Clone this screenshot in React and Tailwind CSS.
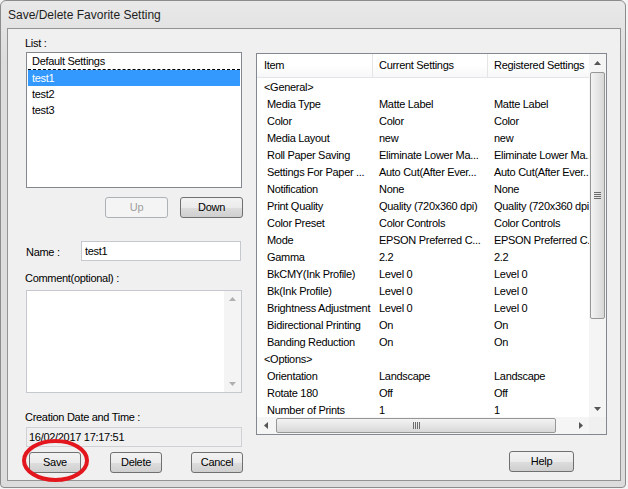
import React from 'react'

const ROWS = [
  ['<General>', '', '', true],
  ['Media Type', 'Matte Label', 'Matte Label'],
  ['Color', 'Color', 'Color'],
  ['Media Layout', 'new', 'new'],
  ['Roll Paper Saving', 'Eliminate Lower Ma...', 'Eliminate Lower Ma...'],
  ['Settings For Paper ...', 'Auto Cut(After Ever...', 'Auto Cut(After Ever...'],
  ['Notification', 'None', 'None'],
  ['Print Quality', 'Quality (720x360 dpi)', 'Quality (720x360 dpi)'],
  ['Color Preset', 'Color Controls', 'Color Controls'],
  ['Mode', 'EPSON Preferred C...', 'EPSON Preferred C...'],
  ['Gamma', '2.2', '2.2'],
  ['BkCMY(Ink Profile)', 'Level 0', 'Level 0'],
  ['Bk(Ink Profile)', 'Level 0', 'Level 0'],
  ['Brightness Adjustment', 'Level 0', 'Level 0'],
  ['Bidirectional Printing', 'On', 'On'],
  ['Banding Reduction', 'On', 'On'],
  ['<Options>', '', '', true],
  ['Orientation', 'Landscape', 'Landscape'],
  ['Rotate 180', 'Off', 'Off'],
  ['Number of Prints', '1', '1'],
]

function Tri({ dir, color = '#555' }) {
  const vert = dir === 'up' || dir === 'down'
  const w = vert ? 7 : 4
  const h = vert ? 4 : 7
  const pts = { up: '0,4 3.5,0 7,4', down: '0,0 7,0 3.5,4', left: '4,0 4,7 0,3.5', right: '0,0 0,7 4,3.5' }[dir]
  return (
    <svg width={w} height={h} viewBox={`0 0 ${w} ${h}`}>
      <polygon points={pts} fill={color} />
    </svg>
  )
}

function Btn({ children, className = '', disabled }) {
  return (
    <div
      className={`h-[21px] flex items-center justify-center rounded-[3px] border ${
        disabled
          ? 'border-[#adb2b5] bg-[#f4f4f4] text-[#a0a0a0]'
          : 'border-[#707070] bg-[linear-gradient(to_bottom,#f2f2f2_0%,#ebebeb_50%,#dddddd_51%,#cfcfcf_100%)]'
      } ${className}`}
    >
      {children}
    </div>
  )
}

function Grip({ vertical }) {
  return (
    <div className={`flex ${vertical ? 'flex-col gap-[1px]' : 'flex-row gap-[1px]'}`}>
      {[0, 1, 2, 3].map((i) => (
        <div key={i} className={vertical ? 'w-[7px] h-[1px] bg-[#6b6b6b]' : 'w-[1px] h-[7px] bg-[#6b6b6b]'} />
      ))}
    </div>
  )
}

export default function App() {
  return (
    <div className="w-[628px] h-[489px] bg-[#f4f4f4] relative overflow-hidden font-['Liberation_Sans',Arial,sans-serif] text-[11px] text-black tracking-[-0.3px]">
      <div className="w-[626px] h-[488px] rounded-t-[6px] rounded-b-[4px] border border-[#8c8c8c] bg-[linear-gradient(to_bottom,#e9e9e9,#dcdcdc_60px,#dcdcdc)] flex flex-col">
        {/* title bar */}
        <div className="h-[27px] flex items-center pl-[7px] text-[12px] tracking-normal text-[#1e1e1e]">
          Save/Delete Favorite Setting
        </div>

        {/* client area */}
        <div className="ml-[6px] w-[614px] h-[453px] border border-[#939393] bg-[#f0f0f0] flex flex-row">
          {/* left column */}
          <div className="ml-[18px] w-[217px] pt-[7px] flex flex-col">
            <div className="h-[14px] leading-[14px] -ml-px">List :</div>
            <div className="mt-[2px] w-[216px] h-[136px] border border-[#828790] bg-white pt-px px-px">
              <div className="h-[16px] leading-[15px] pl-[4px] border-b border-dashed border-black">Default Settings</div>
              <div className="h-[16px] leading-[16px] pl-[4px] bg-[#3399ff] text-white">test1</div>
              <div className="h-[16px] leading-[16px] pl-[4px]">test2</div>
              <div className="h-[16px] leading-[16px] pl-[4px]">test3</div>
            </div>
            <div className="mt-[9px] flex flex-row justify-end gap-[12px]">
              <Btn disabled className="w-[63px] h-[20px]">Up</Btn>
              <Btn className="w-[63px] h-[20px]">Down</Btn>
            </div>
            <div className="mt-[23px] flex flex-row items-center">
              <div className="w-[56px] -ml-px pl-px pt-[2px]">Name :</div>
              <div className="w-[160px] h-[20px] border border-[#c5c8ce] bg-white pl-[3px] leading-[18px]">test1</div>
            </div>
            <div className="mt-[10px] h-[14px] leading-[14px] -ml-px">Comment(optional) :</div>
            <div className="mt-[5px] w-[216px] h-[103px] border border-[#c5c8ce] bg-white flex flex-row justify-end">
              <div className="w-[17px] h-full bg-[#f4f4f4] flex flex-col items-center justify-between py-[6px]">
                <Tri dir="up" color="#b0b0b0" />
                <Tri dir="down" color="#b0b0b0" />
              </div>
            </div>
            <div className="mt-[17px] h-[14px] leading-[14px] -ml-px">Creation Date and Time :</div>
            <div className="mt-[3px] w-[216px] h-[20px] border border-[#cfd1d5] bg-[#f0f0f0] pl-[2px] leading-[18px]">
              16/02/2017 17:17:51
            </div>
            <div className="mt-[5px] ml-[3px] flex flex-row gap-[29px]">
              <Btn className="w-[52px]">Save</Btn>
              <Btn className="w-[52px]">Delete</Btn>
              <Btn className="w-[52px]">Cancel</Btn>
            </div>
          </div>

          {/* right column */}
          <div className="ml-[13px] pt-[24px] flex flex-col">
            <div className="w-[351px] h-[382px] border border-[#828790] bg-white flex flex-col">
              <div className="h-[363px] flex flex-row">
                <div className="w-[332px] h-full overflow-hidden">
                  <div className="h-[24px] flex flex-row border-b border-[#e5e5e5] bg-[linear-gradient(to_bottom,#ffffff_50%,#f6f7f8)]">
                    <div className="w-[116px] shrink-0 pl-[7px] flex items-center border-r border-[#e5e5e5]">Item</div>
                    <div className="w-[115px] shrink-0 pl-[6px] flex items-center border-r border-[#e5e5e5]">Current Settings</div>
                    <div className="w-[120px] shrink-0 pl-[6px] flex items-center whitespace-nowrap">Registered Settings</div>
                  </div>
                  <div className="pt-px">
                    {ROWS.map(([item, cur, reg, group]) => (
                      <div key={item} className="h-[17px] flex flex-row items-center whitespace-nowrap">
                        <div className={`w-[116px] shrink-0 overflow-hidden ${group ? 'pl-[7px]' : 'pl-[10px]'}`}>{item}</div>
                        <div className="w-[115px] shrink-0 overflow-hidden pl-[6px]">{cur}</div>
                        <div className="w-[140px] shrink-0 overflow-hidden pl-[6px]">{reg}</div>
                      </div>
                    ))}
                  </div>
                </div>
                {/* vertical scrollbar */}
                <div className="w-[17px] h-full bg-[#f5f5f5] flex flex-col">
                  <div className="h-[17px] flex items-center justify-center"><Tri dir="up" /></div>
                  <div className="mt-px h-[247px] mx-px rounded-[2px] border border-[#979797] bg-[linear-gradient(to_right,#f3f3f3,#e6e6e6_50%,#d8d8d8)] flex items-center justify-center">
                    <Grip vertical />
                  </div>
                  <div className="flex-1" />
                  <div className="h-[17px] flex items-center justify-center"><Tri dir="down" /></div>
                </div>
              </div>
              {/* horizontal scrollbar */}
              <div className="h-[17px] flex flex-row">
                <div className="w-[332px] h-full bg-[#f5f5f5] flex flex-row items-center">
                  <div className="w-[17px] h-full flex items-center justify-center"><Tri dir="left" /></div>
                  <div className="ml-[2px] w-[280px] h-[15px] rounded-[2px] border border-[#979797] bg-[linear-gradient(to_bottom,#f3f3f3,#e6e6e6_50%,#d8d8d8)] flex items-center justify-center">
                    <Grip />
                  </div>
                  <div className="flex-1" />
                  <div className="w-[17px] h-full flex items-center justify-center"><Tri dir="right" /></div>
                </div>
                <div className="w-[17px] h-full bg-[#f0f0f0]" />
              </div>
            </div>
            <div className="mt-[16px] ml-[253px]">
              <Btn className="w-[65px]">Help</Btn>
            </div>
          </div>
        </div>
      </div>

      {/* red annotation ellipse */}
      <svg className="absolute left-[22px] top-[439px]" width="67" height="43" viewBox="0 0 67 43">
        <ellipse cx="33.5" cy="21.5" rx="31.5" ry="19.5" fill="none" stroke="#e3161e" strokeWidth="4" />
      </svg>
    </div>
  )
}
